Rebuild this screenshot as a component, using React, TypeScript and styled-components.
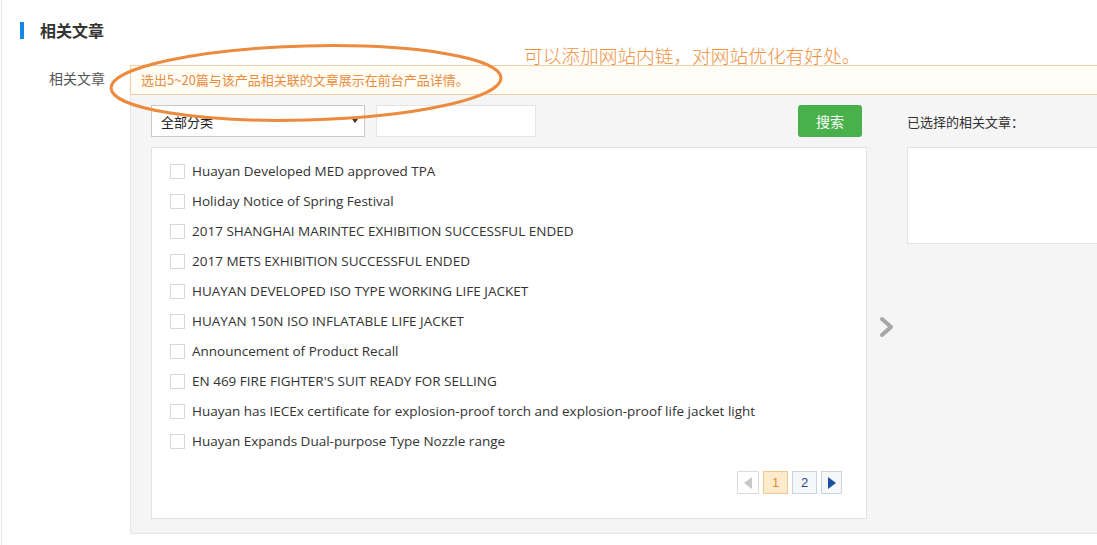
import React from "react";
import styled, { createGlobalStyle } from "styled-components";

const Global = createGlobalStyle`
  html, body { margin: 0; padding: 0; background: #fff; }
  body { font-family: "Open Sans", "Noto Sans CJK SC", sans-serif; overflow: hidden; }
`;

const Page = styled.div`
  position: relative;
  width: 1096px;
  height: 545px;
  margin-left: 1px;
  border-left: 1px solid #e6e6e6;
  overflow: hidden;
  box-sizing: border-box;
`;

const SectionTitle = styled.h2`
  margin: 22px 0 0 18px;
  padding-left: 16px;
  border-left: 4px solid #1687e8;
  height: 17px;
  line-height: 17px;
  font-size: 16px;
  font-weight: bold;
  color: #333;
  font-family: "Noto Sans CJK SC", sans-serif;
`;

const FormRow = styled.div`
  display: grid;
  grid-template-columns: 128px 1000px;
  margin-top: 26px;
`;

const Label = styled.div`
  text-align: right;
  padding-right: 25px;
  padding-top: 3px;
  font-size: 14px;
  color: #555;
  font-family: "Noto Sans CJK SC", sans-serif;
`;

const Content = styled.div`
  display: flex;
  flex-direction: column;
`;

const Hint = styled.div`
  height: 30px;
  box-sizing: border-box;
  border: 1px solid #f0cfa6;
  background: #fffdf6;
  color: #ea8c3c;
  font-size: 13px;
  line-height: 28px;
  padding-left: 10px;
  font-family: "Noto Sans CJK SC", sans-serif;
`;

const Panel = styled.div`
  background: #f5f5f5;
  border: 1px solid #e6e6e6;
  border-top: none;
  padding: 10px 0 14px 20px;
  display: grid;
  grid-template-columns: 716px 40px 300px;
  grid-template-rows: 32px auto;
  row-gap: 10px;
`;

const Toolbar = styled.div`
  display: flex;
  align-items: center;
  gap: 11px;
`;

const Select = styled.div`
  width: 214px;
  height: 32px;
  box-sizing: border-box;
  border: 1px solid #c8c8c8;
  background: #fff;
  display: flex;
  align-items: center;
  justify-content: space-between;
  padding: 0 6px 0 9px;
  font-size: 13px;
  color: #222;
  font-family: "Noto Sans CJK SC", sans-serif;
`;

const Caret = styled.span`
  width: 0;
  height: 0;
  border-left: 3px solid transparent;
  border-right: 3px solid transparent;
  border-top: 4px solid #333;
`;

const TextInput = styled.div`
  width: 160px;
  height: 32px;
  box-sizing: border-box;
  border: 1px solid #e4e4e4;
  background: #fff;
`;

const SearchButton = styled.button`
  margin-left: auto;
  margin-right: 5px;
  width: 64px;
  height: 32px;
  border: none;
  border-radius: 3px;
  background: #48b14c;
  color: #fff;
  font-size: 14px;
  font-family: "Noto Sans CJK SC", sans-serif;
  padding: 0;
`;

const SelectedTitle = styled.div`
  grid-column: 3;
  display: flex;
  align-items: center;
  font-size: 13px;
  color: #333;
  font-family: "Noto Sans CJK SC", sans-serif;
`;

const ListBox = styled.div`
  grid-column: 1;
  grid-row: 2;
  height: 372px;
  box-sizing: border-box;
  background: #fff;
  border: 1px solid #e2e2e2;
  padding: 8px 24px 0 18px;
  display: flex;
  flex-direction: column;
`;

const Item = styled.label`
  display: flex;
  align-items: center;
  gap: 7px;
  height: 30px;
  font-size: 13.5px;
  color: #333;
`;

const Check = styled.span`
  width: 15px;
  height: 15px;
  box-sizing: border-box;
  border: 1px solid #d8d8d8;
  background: #fff;
`;

const Pager = styled.div`
  display: flex;
  justify-content: flex-end;
  gap: 4px;
  margin-top: 15px;
`;

const PageBtn = styled.span<{ $active?: boolean; $w: number }>`
  width: ${(p) => p.$w}px;
  height: 23px;
  box-sizing: border-box;
  border: 1px solid ${(p) => (p.$active ? "#f2c88e" : "#ccd3dc")};
  background: ${(p) => (p.$active ? "#fdeccb" : "#f6f7f9")};
  color: ${(p) => (p.$active ? "#e3893a" : "#2b4c8c")};
  display: flex;
  align-items: center;
  justify-content: center;
  font-size: 13px;
  font-family: "Liberation Sans", sans-serif;
`;

const PrevBtn = styled(PageBtn)`
  border-color: #dcdcdc;
  background: #fff;
`;

const Tri = styled.span<{ $dir: "l" | "r"; $color: string }>`
  width: 0;
  height: 0;
  border-top: 6px solid transparent;
  border-bottom: 6px solid transparent;
  ${(p) =>
    p.$dir === "l"
      ? `border-right: 8px solid ${p.$color};`
      : `border-left: 8px solid ${p.$color};`}
`;

const ArrowCol = styled.div`
  grid-column: 2;
  grid-row: 2;
  padding: 169px 0 0 12px;
`;

const SelectedBox = styled.div`
  grid-column: 3;
  grid-row: 2;
  height: 97px;
  box-sizing: border-box;
  border: 1px solid #e2e2e2;
  background: #fff;
  align-self: start;
`;

const Overlay = styled.svg`
  position: absolute;
  left: 0;
  top: 0;
  pointer-events: none;
`;

const Note = styled.div`
  position: absolute;
  left: 522px;
  top: 41px;
  font-size: 18.7px;
  color: #f0913f;
  font-family: "Noto Sans CJK SC", sans-serif;
  font-weight: 300;
`;

const items = [
  "Huayan Developed MED approved TPA",
  "Holiday Notice of Spring Festival",
  "2017 SHANGHAI MARINTEC EXHIBITION SUCCESSFUL ENDED",
  "2017 METS EXHIBITION SUCCESSFUL ENDED",
  "HUAYAN DEVELOPED ISO TYPE WORKING LIFE JACKET",
  "HUAYAN 150N ISO INFLATABLE LIFE JACKET",
  "Announcement of Product Recall",
  "EN 469 FIRE FIGHTER'S SUIT READY FOR SELLING",
  "Huayan has IECEx certificate for explosion-proof torch and explosion-proof life jacket light",
  "Huayan Expands Dual-purpose Type Nozzle range",
];

export default function App() {
  return (
    <>
      <Global />
      <Page>
        <SectionTitle>相关文章</SectionTitle>
        <FormRow>
          <Label>相关文章</Label>
          <Content>
            <Hint>选出5~20篇与该产品相关联的文章展示在前台产品详情。</Hint>
            <Panel>
              <Toolbar>
                <Select>
                  全部分类
                  <Caret />
                </Select>
                <TextInput />
                <SearchButton>搜索</SearchButton>
              </Toolbar>
              <div />
              <SelectedTitle>已选择的相关文章：</SelectedTitle>
              <ListBox>
                {items.map((t) => (
                  <Item key={t}>
                    <Check />
                    {t}
                  </Item>
                ))}
                <Pager>
                  <PrevBtn $w={22}>
                    <Tri $dir="l" $color="#c8c8c8" />
                  </PrevBtn>
                  <PageBtn $w={25} $active>
                    1
                  </PageBtn>
                  <PageBtn $w={25}>2</PageBtn>
                  <PageBtn $w={21}>
                    <Tri $dir="r" $color="#1d4fa0" />
                  </PageBtn>
                </Pager>
              </ListBox>
              <ArrowCol>
                <svg width="16" height="22" viewBox="0 0 16 22">
                  <path d="M3 3 L12 11 L3 19" fill="none" stroke="#a6a6a6" strokeWidth="4" strokeLinecap="round" strokeLinejoin="round" />
                </svg>
              </ArrowCol>
              <SelectedBox />
            </Panel>
          </Content>
        </FormRow>
        <Overlay width="1096" height="545">
          <ellipse cx="304" cy="83" rx="195" ry="37" fill="none" stroke="#ec8a3e" strokeWidth="3" transform="rotate(-1.5 304 83)" />
        </Overlay>
        <Note>可以添加网站内链，对网站优化有好处。</Note>
      </Page>
    </>
  );
}
